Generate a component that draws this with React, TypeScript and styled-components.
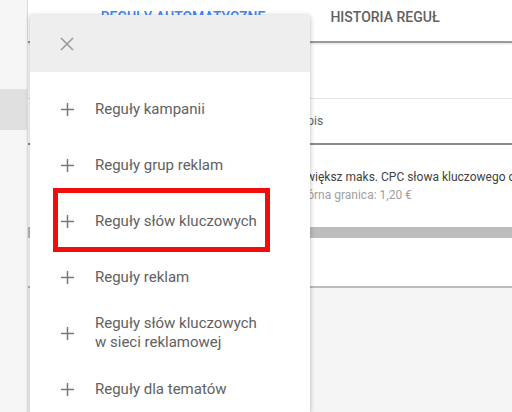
import React from "react"
import styled, {createGlobalStyle} from "styled-components"

const GlobalStyle = createGlobalStyle`
  html, body, #root {
    height: 100%;
  }

  body {
    margin: 0;
    font-family: Roboto, "Liberation Sans", sans-serif;
    background: #ffffff;
    overflow: hidden;
  }
`;

const Page = styled.div`
  position: relative;
  display: flex;
  height: 100%;
`;

const Rail = styled.aside`
  width: 27px;
  flex-shrink: 0;
  padding-top: 89px;
  background: #f6f6f6;
  border-right: 1px solid #e2e2e2;
`;

const RailItem = styled.div<{active?: boolean}>`
  height: 41px;
  background: ${props => props.active ? "#e0e0e0" : "transparent"};
`;

const Main = styled.main`
  flex: 1;
  display: flex;
  flex-direction: column;
  min-width: 0;
`;

const Tabs = styled.nav`
  display: flex;
  height: 41px;
  padding-left: 54px;
  border-bottom: 2px solid #9a9a9a;
  box-shadow: 0 1px 2px rgba(0, 0, 0, 0.12);
`;

const Tab = styled.div<{active?: boolean}>`
  width: 202px;
  text-align: center;
  line-height: 35px;
  font-size: 14px;
  font-weight: 500;
  white-space: nowrap;
  color: ${props => props.active ? "#4285f4" : "#616161"};
`;

const Toolbar = styled.div`
  height: 54px;
  margin-top: 1px;
  border-bottom: 1px solid #e4e4e4;
`;

const Row = styled.div`
  display: grid;
  grid-template-columns: 271px 1fr;
  font-size: 12px;
  white-space: nowrap;
  overflow: hidden;
`;

const HeadRow = styled(Row)`
  height: 44px;
  align-items: center;
  color: #616161;
  border-bottom: 2px solid #8c8c8c;
`;

const RuleRow = styled(Row)`
  height: 82px;
  padding-top: 25px;
  box-sizing: border-box;
  align-content: start;
  row-gap: 3px;
`;

const RuleTitle = styled.div`
  grid-column: 2;
  color: #424242;
  line-height: 15px;
`;

const RuleSub = styled.div`
  grid-column: 2;
  color: #a0a0a0;
  line-height: 15px;
`;

const Bar = styled.div`
  height: 11px;
  background: #bdbdbd;
`;

const Spacer = styled.div`
  height: 48px;
`;

const Footer = styled.div`
  flex: 1;
  background: #f5f5f5;
  border-top: 2px solid #bcbcbc;
`;

const Menu = styled.div`
  position: absolute;
  left: 30px;
  top: 15px;
  bottom: 0;
  width: 280px;
  background: #ffffff;
  box-shadow: 0 1px 5px rgba(0, 0, 0, 0.28);
`;

const MenuHeader = styled.div`
  height: 57px;
  display: flex;
  align-items: center;
  padding-left: 30px;
  background: #eeeeee;
`;

const MenuList = styled.ul`
  list-style: none;
  margin: 0;
  padding: 9px 0 0;
`;

const MenuItem = styled.li<{highlight?: boolean}>`
  position: relative;
  display: flex;
  align-items: center;
  min-height: 56px;
  padding: 8px 0 8px 31px;
  box-sizing: border-box;
  font-size: 15px;
  line-height: 19px;
  color: #616161;

  &::after {
    content: "";
    display: ${props => props.highlight ? "block" : "none"};
    position: absolute;
    left: 23px;
    top: -5px;
    width: 217px;
    height: 64px;
    box-sizing: border-box;
    border: 5px solid #f20d0d;
  }
`;

const ItemIcon = styled.span`
  display: flex;
  width: 34px;
  flex-shrink: 0;
`;

const CloseIcon = () => (
  <svg width="14" height="14" viewBox="0 0 14 14">
    <path d="M1 1L13 13M13 1L1 13" stroke="#9a9a9a" strokeWidth="1.6" fill="none"/>
  </svg>
);

const PlusIcon = () => (
  <svg width="13" height="13" viewBox="0 0 13 13">
    <path d="M6.5 0V13M0 6.5H13" stroke="#787878" strokeWidth="1.5" fill="none"/>
  </svg>
);

const items = [
  {label: "Reguły kampanii"},
  {label: "Reguły grup reklam"},
  {label: "Reguły słów kluczowych", highlight: true},
  {label: "Reguły reklam"},
  {label: <>Reguły słów kluczowych<br/>w sieci reklamowej</>},
  {label: "Reguły dla tematów"},
];

export default function App() {
  return (
    <Page>
      <GlobalStyle/>
      <Rail>
        <RailItem active/>
      </Rail>
      <Main>
        <Tabs>
          <Tab active>REGUŁY AUTOMATYCZNE</Tab>
          <Tab>HISTORIA REGUŁ</Tab>
        </Tabs>
        <Toolbar/>
        <HeadRow>
          <span/>
          <span>Opis</span>
        </HeadRow>
        <RuleRow>
          <RuleTitle>Zwiększ maks. CPC słowa kluczowego o</RuleTitle>
          <RuleSub>Górna granica: 1,20 €</RuleSub>
        </RuleRow>
        <Bar/>
        <Spacer/>
        <Footer/>
      </Main>
      <Menu>
        <MenuHeader>
          <CloseIcon/>
        </MenuHeader>
        <MenuList>
          {items.map((item, i) => (
            <MenuItem key={i} highlight={item.highlight}>
              <ItemIcon><PlusIcon/></ItemIcon>
              <span>{item.label}</span>
            </MenuItem>
          ))}
        </MenuList>
      </Menu>
    </Page>
  );
}
